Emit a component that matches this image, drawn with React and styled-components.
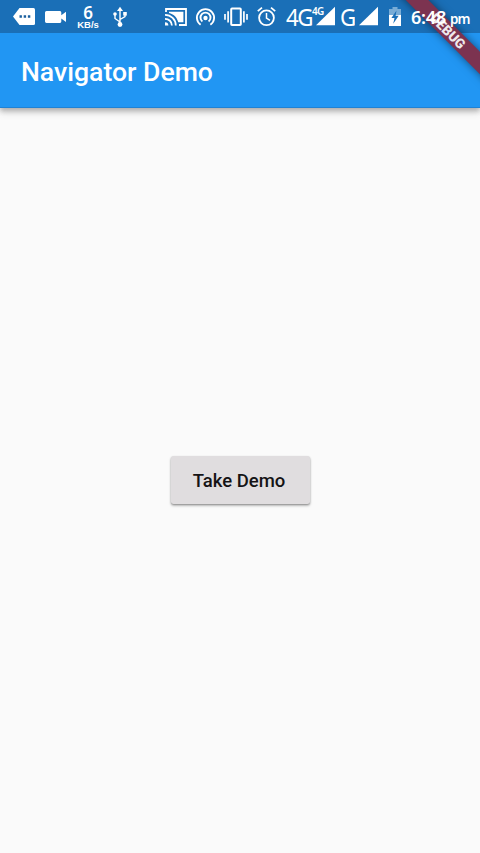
import React from "react";
import styled, { createGlobalStyle } from "styled-components";

const GlobalStyle = createGlobalStyle`
  * { box-sizing: border-box; }
  html, body { margin: 0; padding: 0; overflow: hidden; background: #fafafa; }
`;

const Screen = styled.div`
  position: relative;
  display: flex;
  flex-direction: column;
  width: 480px;
  height: 853px;
  overflow: hidden;
  background: #fafafa;
  font-family: Roboto, "Noto Sans", sans-serif;
`;

const Header = styled.header`
  position: relative;
  z-index: 1;
  flex: none;
  height: 108px;
  background: #2196f3;
  border-bottom: 1px solid #1f82d4;
  box-shadow: 0 3px 5px rgba(0, 0, 0, 0.24), 0 5px 8px rgba(0, 0, 0, 0.1);
`;

const StatusBar = styled.div`
  display: flex;
  align-items: flex-start;
  height: 33px;
  padding-top: 6px;
  background: #1a6fb7;
  color: #fff;
`;

const StatusItem = styled.div`
  position: relative;
  z-index: 3;
  flex: none;
  width: ${(p) => p.$w}px;
  height: 22px;
  margin-left: ${(p) => p.$gap}px;

  svg { display: block; overflow: visible; }
`;

const Speed = styled(StatusItem)`
  display: flex;
  flex-direction: column;
  align-items: center;
  font-weight: 500;
  white-space: nowrap;
`;

const SpeedValue = styled.span`
  font: 600 17px/13px "Noto Sans", sans-serif;
`;

const SpeedUnit = styled.span`
  margin-top: 1px;
  font: 700 9.5px/10px "Liberation Sans", sans-serif;
`;

const Network = styled(StatusItem)`
  font: 400 24px/22px "Noto Sans", sans-serif;
  letter-spacing: -1.6px;
  white-space: nowrap;
  transform: scaleX(0.93);
  transform-origin: left;
`;

const NetworkSmall = styled(StatusItem)`
  font: 600 10px/11px "Noto Sans", sans-serif;
  letter-spacing: -0.7px;
  white-space: nowrap;
`;

const Clock = styled(StatusItem)`
  font: 600 18px/23px "Noto Sans", sans-serif;
  letter-spacing: -0.2px;
  white-space: nowrap;
`;

const Meridiem = styled(StatusItem)`
  font: 600 13.5px/26px "Noto Sans", sans-serif;
  letter-spacing: -0.9px;
  white-space: nowrap;
`;

const AppBar = styled.div`
  display: flex;
  align-items: center;
  height: 74px;
  padding: 3px 21px 0;
`;

const Title = styled.h1`
  margin: 0;
  color: #fff;
  font-size: 26.6px;
  font-weight: 500;
  line-height: 32px;
  white-space: nowrap;
`;

const BannerClip = styled.div`
  position: absolute;
  z-index: 2;
  top: 0;
  right: 0;
  width: 120px;
  height: 107px;
  overflow: hidden;
  pointer-events: none;
`;

const Banner = styled.div`
  position: absolute;
  left: 8px;
  top: 23px;
  width: 160px;
  height: 16px;
  transform: rotate(45deg);
  background: #7c3350;
  box-shadow: 0 0 8px rgba(0, 0, 0, 0.5);
  color: #eee8ec;
  font-size: 13.6px;
  font-weight: 900;
  line-height: 16px;
  text-align: center;
`;

const Body = styled.main`
  display: flex;
  flex: 1;
  align-items: center;
  justify-content: center;
  padding: 0 0 1px 1px;
`;

const RaisedButton = styled.button`
  width: 139px;
  height: 48px;
  margin: 0;
  padding: 1px 0 0;
  border: 0;
  border-radius: 2.7px;
  background: #e0dddf;
  box-shadow: 0 1px 2px rgba(0, 0, 0, 0.32), 0 2px 3px rgba(0, 0, 0, 0.18);
  color: #151315;
  font: 500 18.5px/22px Roboto, sans-serif;
  text-indent: -3px;
  white-space: nowrap;
`;

const MessageIcon = () => (
  <svg width="22" height="22" viewBox="0 0 22 22">
    <path d="M6.5 2H20.5Q22 2 22 3.5V17.5Q22 19 20.5 19H6.5L0 10.5Z" fill="#fff" />
    <path d="M6.5 9.3h2.4v2.4H6.5zm4.2 0h2.4v2.4h-2.4zm4.2 0h2.4v2.4h-2.4z" fill="#1a5f9e" />
  </svg>
);

const VideoIcon = () => (
  <svg width="21" height="22" viewBox="0 0 21 22" fill="#fff">
    <path d="M1.5 5H15Q16.3 5 16.3 6.5V9.2L21 5.7V16L16.3 12.5V15.6Q16.3 17 15 17H1.5Q0 17 0 15.6V6.5Q0 5 1.5 5Z" />
  </svg>
);

const UsbIcon = () => (
  <svg width="14" height="22" viewBox="0 0 14 22" fill="none" stroke="#fff" strokeWidth="1.4">
    <path d="M7 3V18M7 16L2 12.5V8M7 13.5L12 10.5V7" />
    <path d="M7 .8L10 5H4Z" fill="#fff" stroke="none" />
    <circle cx="7" cy="18.5" r="2.4" fill="#fff" stroke="none" />
    <circle cx="2" cy="8" r="1.8" fill="#fff" stroke="none" />
    <path d="M10.2 6h3.6v3.6h-3.6z" fill="#fff" stroke="none" />
  </svg>
);

const CastIcon = () => (
  <svg width="22" height="22" viewBox="0 0 22 22" fill="none" stroke="#fff" strokeWidth="1.8">
    <path d="M1 6V3H21V19H14" />
    <path d="M4 5.8H18.4V16.2H13.2C12 11.2 8.5 8 4 7Z" fill="#fff" stroke="none" />
    <path d="M0 8.8C6 8.8 10.8 13.5 10.8 19.6M0 12.8C4 12.8 6.9 15.7 6.9 19.6" />
    <path d="M0 16.2Q3.4 16.2 3.4 19.6H0Z" fill="#fff" stroke="none" />
  </svg>
);

const HotspotIcon = () => (
  <svg width="19" height="22" viewBox="0 0 19 22" fill="none" stroke="#fff" strokeWidth="1.9">
    <path d="M4.6 18.8A8.6 8.6 0 1 1 14.4 18.8M6.4 15.5A5 5 0 1 1 12.6 15.5" />
    <circle cx="9.5" cy="12" r="2.2" fill="#fff" stroke="none" />
  </svg>
);

const VibrateIcon = () => (
  <svg width="24" height="22" viewBox="0 0 24 22" fill="none" stroke="#fff" strokeWidth="2">
    <rect x="7.2" y="2.6" width="9.6" height="16.5" rx=".8" />
    <path d="M4.1 5.2V16.4M1 8V13.8M19.9 5.2V16.4M23 8V13.8" strokeWidth="1.7" />
  </svg>
);

const AlarmIcon = () => (
  <svg width="19" height="22" viewBox="0 0 19 22" fill="none" stroke="#fff" strokeWidth="1.8">
    <circle cx="9.5" cy="11.8" r="7.4" />
    <path d="M9.5 7V12.2L13 14.4" strokeWidth="1.5" />
    <path d="M.8 5.1L5 1.6M18.2 5.1L14 1.6" />
  </svg>
);

const SignalIcon = () => (
  <svg width="19" height="22" viewBox="0 0 19 22" fill="#fff">
    <path d="M19 .8V19.3H0Z" />
  </svg>
);

const BatteryIcon = () => (
  <svg width="12" height="22" viewBox="0 0 12 22">
    <path d="M3.5 1H8.5V3H12V9H0V3H3.5Z" fill="#78acd6" />
    <path d="M0 9H12V20H0Z" fill="#fff" />
    <path d="M7.5 4.5L2.4 12H5.5L4.2 17.8L9.7 9.8H6.6Z" fill="#1a6fb7" />
  </svg>
);

export default function App() {
  return (
    <>
      <GlobalStyle />
      <Screen>
        <Header>
          <StatusBar>
            <StatusItem $w={22} $gap={13}><MessageIcon /></StatusItem>
            <StatusItem $w={21} $gap={10}><VideoIcon /></StatusItem>
            <Speed $w={24} $gap={10}>
              <SpeedValue>6</SpeedValue>
              <SpeedUnit>KB/s</SpeedUnit>
            </Speed>
            <StatusItem $w={14} $gap={13}><UsbIcon /></StatusItem>
            <StatusItem $w={22} $gap={38}><CastIcon /></StatusItem>
            <StatusItem $w={19} $gap={9}><HotspotIcon /></StatusItem>
            <StatusItem $w={24} $gap={9}><VibrateIcon /></StatusItem>
            <StatusItem $w={19} $gap={9}><AlarmIcon /></StatusItem>
            <Network $w={26} $gap={10}>4G</Network>
            <NetworkSmall $w={12} $gap={0}>4G</NetworkSmall>
            <StatusItem $w={19} $gap={-8}><SignalIcon /></StatusItem>
            <Network $w={16} $gap={5}>G</Network>
            <StatusItem $w={19} $gap={3}><SignalIcon /></StatusItem>
            <StatusItem $w={12} $gap={11}><BatteryIcon /></StatusItem>
            <Clock $w={36} $gap={10}>6:48</Clock>
            <Meridiem $w={20} $gap={3}>pm</Meridiem>
          </StatusBar>
          <AppBar>
            <Title>Navigator Demo</Title>
          </AppBar>
          <BannerClip>
            <Banner>DEBUG</Banner>
          </BannerClip>
        </Header>
        <Body>
          <RaisedButton type="button">Take Demo</RaisedButton>
        </Body>
      </Screen>
    </>
  );
}
